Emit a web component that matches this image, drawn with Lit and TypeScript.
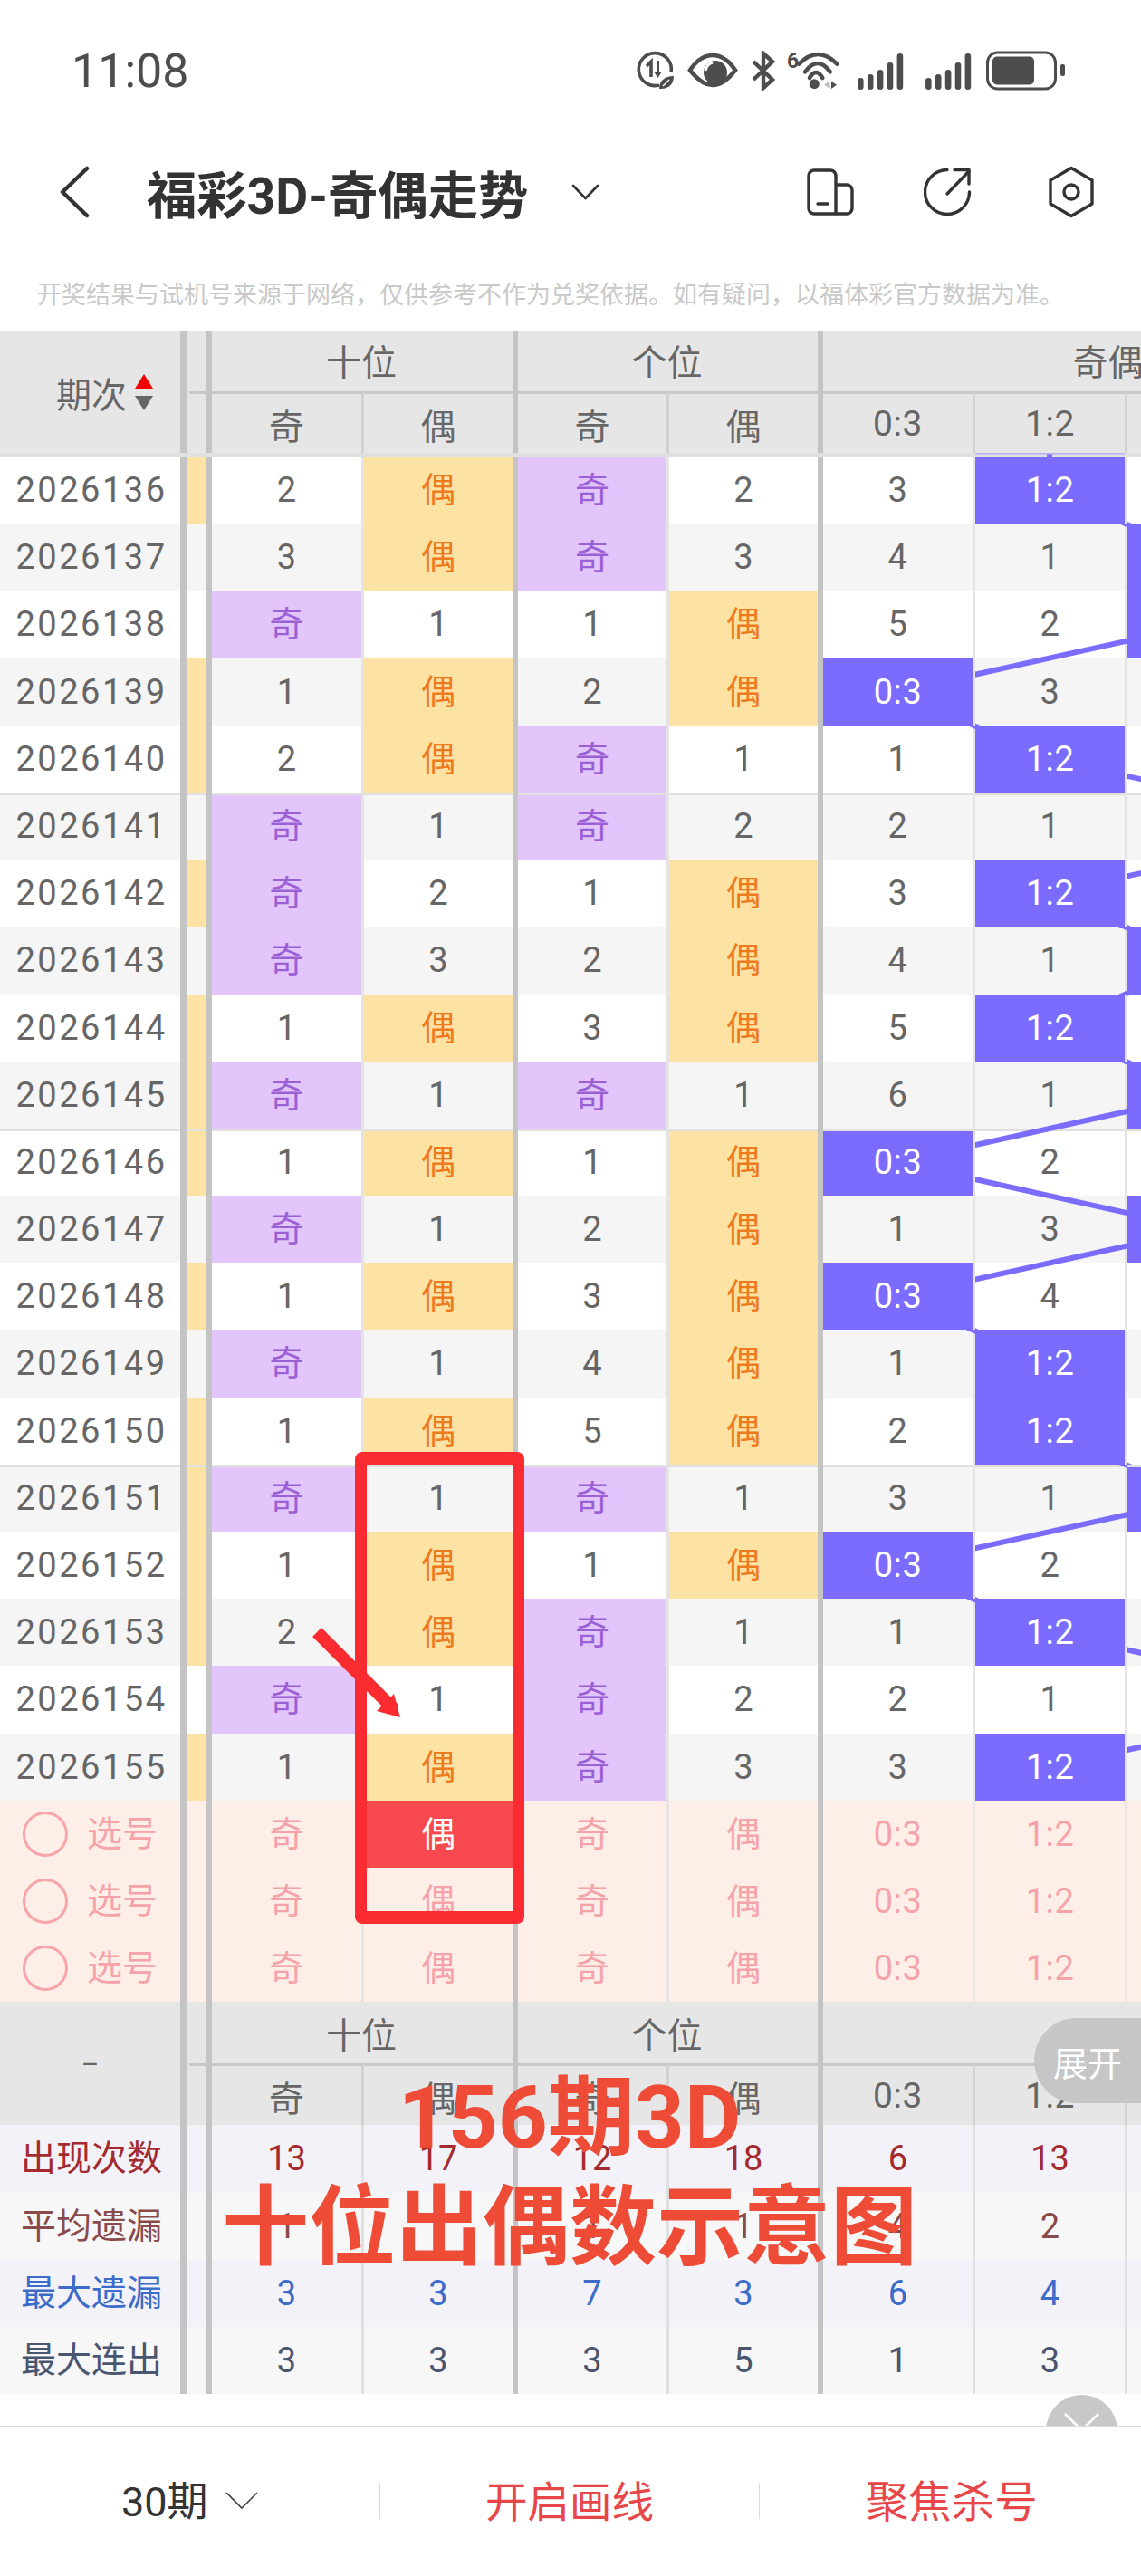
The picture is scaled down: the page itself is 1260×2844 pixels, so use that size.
import {LitElement, html, css, svg} from 'lit';
import {customElement} from 'lit/decorators.js';

const ROW_H = 74.2;
const COL_X = [991, 1159, 1327, 1495];

// ten-odd, ten-even, one-odd, one-even, 0:3 col, 1:2 col, hit column, side flag
const ROWS: [string, string[], number, boolean][] = [
  ['2026136', ['2', '偶', '奇', '2', '3', ''], 1, true],
  ['2026137', ['3', '偶', '奇', '3', '4', '1'], 2, false],
  ['2026138', ['奇', '1', '1', '偶', '5', '2'], 2, false],
  ['2026139', ['1', '偶', '2', '偶', '', '3'], 0, true],
  ['2026140', ['2', '偶', '奇', '1', '1', ''], 1, true],
  ['2026141', ['奇', '1', '奇', '2', '2', '1'], 3, false],
  ['2026142', ['奇', '2', '1', '偶', '3', ''], 1, true],
  ['2026143', ['奇', '3', '2', '偶', '4', '1'], 2, false],
  ['2026144', ['1', '偶', '3', '偶', '5', ''], 1, true],
  ['2026145', ['奇', '1', '奇', '1', '6', '1'], 2, true],
  ['2026146', ['1', '偶', '1', '偶', '', '2'], 0, true],
  ['2026147', ['奇', '1', '2', '偶', '1', '3'], 2, false],
  ['2026148', ['1', '偶', '3', '偶', '', '4'], 0, true],
  ['2026149', ['奇', '1', '4', '偶', '1', ''], 1, false],
  ['2026150', ['1', '偶', '5', '偶', '2', ''], 1, true],
  ['2026151', ['奇', '1', '奇', '1', '3', '1'], 2, true],
  ['2026152', ['1', '偶', '1', '偶', '', '2'], 0, true],
  ['2026153', ['2', '偶', '奇', '1', '1', ''], 1, true],
  ['2026154', ['奇', '1', '奇', '2', '2', '1'], 3, false],
  ['2026155', ['1', '偶', '奇', '3', '3', ''], 1, true],
];

const RATIOS = ['0:3', '1:2', '2:1', '3:0'];

const STATS: [string, string, string[]][] = [
  ['出现次数', 'count', ['13', '17', '12', '18', '6', '13']],
  ['平均遗漏', 'avg', ['1', '1', '1', '1', '4', '2']],
  ['最大遗漏', 'miss', ['3', '3', '7', '3', '6', '4']],
  ['最大连出', 'run', ['3', '3', '3', '5', '1', '3']],
];

const KINDS = ['thin', 'thick', 'thin', 'thick', 'thin', 'thin', 'thin', 'thin'];

@customElement('app-root')
export class AppRoot extends LitElement {
  static styles = css`
    :host {
      display: block;
      position: relative;
      width: 1260px;
      height: 2844px;
      overflow: hidden;
      background: #fff;
      font-family: Roboto, 'Noto Sans CJK SC', sans-serif;
      color: #666;
      --cols: 206px 28px 168px 170px 167px 170px 168px 168px 168px 168px;
    }
    .status {
      height: 130px;
      display: flex;
      align-items: flex-start;
      box-sizing: border-box;
      padding: 50px 0 0 79px;
      color: #4d4d4d;
    }
    .time {
      font-size: 52px;
      line-height: 58px;
      width: 622px;
    }
    .status svg {
      flex: none;
      display: block;
      margin-top: 5px;
    }
    .status .eye {
      margin-top: 8px;
    }
    .status .bt {
      margin-top: 6px;
    }
    .nav {
      height: 164px;
      display: flex;
      align-items: center;
      color: #333;
      position: relative;
    }
    .nav svg {
      flex: none;
      display: block;
    }
    .back {
      margin: 0 0 0 64px;
    }
    .title {
      font-size: 55.3px;
      font-weight: 700;
      margin-left: 62px;
      width: 469px;
      white-space: nowrap;
    }
    .caret {
      margin-right: 229px;
    }
    .notice {
      height: 71px;
      padding: 14px 0 0 41px;
      box-sizing: border-box;
      font-size: 27px;
      line-height: 36px;
      color: #c9c9c9;
      white-space: nowrap;
    }
    .table {
      width: 1596px;
    }
    .head {
      display: grid;
      grid-template-columns: var(--cols);
      grid-template-rows: 67px 68px;
      background: #e6e6e6;
      font-size: 39px;
      text-align: center;
    }
    .head.first {
      border-bottom: 4px solid #e0e0e0;
    }
    .head.second {
      grid-template-rows: 68px 68px;
    }
    .head > div {
      display: flex;
      align-items: center;
      justify-content: center;
      box-sizing: border-box;
    }
    .first .group {
      padding-bottom: 4px;
    }
    .corner {
      grid-row: span 2;
      border-right: 7px solid #c4c4c4;
      gap: 9px;
    }
    .first .corner {
      padding: 0 0 0 32px;
    }
    .dash {
      font-size: 30px;
    }
    .sort {
      display: flex;
      flex-direction: column;
      gap: 8px;
    }
    .up,
    .down {
      width: 0;
      height: 0;
      border-left: 10px solid transparent;
      border-right: 10px solid transparent;
    }
    .up {
      border-bottom: 16px solid #f00000;
    }
    .down {
      border-top: 16px solid #666;
    }
    .group {
      border-right: 6px solid #c4c4c4;
      padding-right: 2px;
    }
    .side {
      border-right: 7px solid #c4c4c4;
    }
    .group.two {
      grid-column: span 2;
    }
    .group.four {
      grid-column: span 4;
      border-right: 0;
      padding-right: 4px;
    }
    .sub {
      border-top: 3px solid #c8c8c8;
      border-right: 3px solid #d2d2d2;
    }
    .sub.thick {
      border-right: 6px solid #c4c4c4;
    }
    .sub.gap {
      margin-left: 3px;
      border-right: 7px solid #c4c4c4;
    }
    .body {
      position: relative;
    }
    .links {
      position: absolute;
      left: 0;
      top: 0;
      z-index: 1;
      overflow: visible;
      pointer-events: none;
    }
    .row {
      display: grid;
      grid-template-columns: var(--cols);
      height: 74.2px;
      background: #fff;
      font-size: 38px;
      text-align: center;
      line-height: 74px;
    }
    .row.alt {
      background: #f5f5f5;
    }
    .row > div {
      box-sizing: border-box;
      border-right: 3px solid #e4e4e4;
    }
    .row > .thick {
      border-right: 6px solid #c4c4c4;
    }
    .row > .period {
      border-right: 7px solid #c4c4c4;
      letter-spacing: 2.5px;
      padding-left: 3px;
    }
    .row > .flag {
      border-right: 7px solid #c4c4c4;
    }
    .row.cut > div {
      box-shadow: inset 0 3px #e0e0e0;
    }
    .ji {
      background: #e2c6fb;
      color: #9b5fd6;
    }
    .ou,
    .flag.on {
      background: #fde3a3;
      color: #ee7a1e;
    }
    .row > .hit {
      position: relative;
      z-index: 2;
      background: #7c6bff;
      color: #fff;
    }
    .num {
      letter-spacing: 0.6px;
    }
    .pick {
      background: #fdeee8;
      color: #f5a3a8;
    }
    .pick.row > div {
      border-right-color: #e6e6e6;
    }
    .pick.row > .thick,
    .pick.row > .period,
    .pick.row > .flag {
      border-right-color: #c4c4c4;
    }
    .row > .period.choose {
      display: flex;
      align-items: center;
      gap: 21px;
      padding-left: 25px;
      letter-spacing: 0;
      font-size: 39px;
    }
    .ring {
      width: 50px;
      height: 50px;
      box-sizing: border-box;
      border: 3px solid #f7a5a8;
      border-radius: 50%;
    }
    .row > .sel {
      background: #f84a4e;
      color: #fff;
    }
    .stat {
      background: #f2f2f8;
    }
    .stat.even {
      background: #f7f7f8;
    }
    .stat.row > div {
      border-right-color: #e0e0e0;
    }
    .stat.row > .thick,
    .stat.row > .period,
    .stat.row > .flag {
      border-right-color: #c4c4c4;
    }
    .stat .period {
      letter-spacing: 0;
      font-size: 39px;
    }
    .count {
      color: #a52a2f;
    }
    .avg {
      color: #8a4a4a;
    }
    .miss {
      color: #3d6bc9;
    }
    .run {
      color: #4a5570;
    }
    .bar {
      position: absolute;
      left: 0;
      right: 0;
      bottom: 0;
      height: 166px;
      box-sizing: border-box;
      border-top: 2px solid #dcdcdc;
      padding-bottom: 2px;
      background: #fff;
      display: flex;
      align-items: center;
      z-index: 6;
    }
    .bar > div {
      flex: 1;
      height: 40px;
      display: flex;
      align-items: center;
      justify-content: center;
      gap: 19px;
      font-size: 46.5px;
      color: #e8474a;
    }
    .bar > div > span {
      position: relative;
      top: -3px;
    }
    .bar > div + div {
      border-left: 1px solid #dcdcdc;
    }
    .bar > .kill {
      font-size: 47.5px;
      padding-left: 2px;
    }
    .bar .span {
      color: #333;
      font-size: 45px;
    }
    .close {
      position: absolute;
      left: 1155px;
      top: 2644px;
      width: 79px;
      height: 79px;
      border-radius: 50%;
      background: #c8c8c8;
      z-index: 5;
    }
    .expand {
      position: absolute;
      left: 1142px;
      top: 2228px;
      width: 118px;
      height: 94px;
      border-radius: 47px 0 0 47px;
      background: #c6c6c6;
      color: #fff;
      font-size: 38px;
      display: flex;
      align-items: center;
      justify-content: center;
      z-index: 5;
    }
    .frame {
      position: absolute;
      left: 392px;
      top: 1603px;
      width: 187px;
      height: 521px;
      box-sizing: border-box;
      border: 14px solid #fb2c31;
      border-left-width: 13px;
      border-right-width: 13px;
      border-radius: 8px;
      z-index: 7;
    }
    .arrow {
      position: absolute;
      left: 340px;
      top: 1795px;
      z-index: 8;
    }
    .caption {
      position: absolute;
      left: 0;
      width: 1258px;
      text-align: center;
      font-size: 96px;
      font-weight: 700;
      line-height: 96px;
      color: #ee4c37;
      z-index: 8;
      white-space: nowrap;
    }
    .caption.one {
      top: 2290px;
    }
    .caption.two {
      top: 2411px;
    }
  `;

  statusIcons() {
    const bars = [13, 17, 22, 30, 40];
    const signal = (x: number, w: number) => html`<svg style="margin-left:${x}px" width="${w}" height="46" viewBox="0 0 ${w} 46" fill="#4d4d4d">
      ${bars.map((h, i) => svg`<rect x=${i * 10.9} y=${44 - h} width="6.6" height=${h} rx="3.3"></rect>`)}
    </svg>`;
    return html`
      <svg width="44" height="46" viewBox="0 0 44 46" fill="none" stroke="#4d4d4d">
        <path d="M40 25A18 18 0 1 0 27 39" stroke-width="3.6"></path>
        <path d="M13 18L18 13V30" stroke-width="3.6"></path>
        <path d="M25.5 12V29" stroke-width="3"></path>
        <path d="M21 24H30L25.5 31Z" fill="#4d4d4d" stroke="none"></path>
        <path d="M27 43C27 34 33 29 43 29C43 38 37 44 27 43Z" fill="#4d4d4d" stroke="none"></path>
        <path d="M31 40L38 33" stroke="#fff" stroke-width="1.5"></path>
      </svg>
      <svg class="eye" style="margin-left:14px" width="56" height="40" viewBox="0 0 56 40" fill="none" stroke="#4d4d4d">
        <path d="M3 19.5C12 6 20 3 28 3C36 3 44 6 53 19.5C44 31 36 36 28 36C20 36 12 31 3 19.5Z" stroke-width="4.6"></path>
        <circle cx="31" cy="22" r="13" fill="#4d4d4d" stroke="none"></circle>
        <path d="M20 20C21 15 24 12 28 11" stroke="#fff" stroke-width="3"></path>
      </svg>
      <svg class="bt" style="margin-left:14px" width="28" height="44" viewBox="0 0 28 44" fill="none" stroke="#4d4d4d" stroke-width="4.4">
        <path d="M3 12L24 32L14 41V3L24 12L3 32"></path>
      </svg>
      <svg style="margin-left:11px" width="60" height="46" viewBox="0 0 60 46" fill="none" stroke="#4d4d4d" stroke-width="4.6" stroke-linecap="round">
        <text x="1" y="20" font-size="23" font-weight="700" fill="#4d4d4d" stroke="none">6</text>
        <path d="M14.3 15.7Q35.3 -5.7 56.3 15.7"></path>
        <path d="M21 24.3Q35 5.7 48.7 24.3"></path>
        <path d="M26 31Q33 19 40.3 31"></path>
        <circle cx="31.3" cy="37.7" r="5.5" fill="#4d4d4d" stroke="none"></circle>
        <path d="M42 38.5L48.5 34.5V43Z" fill="#bbb" stroke="none"></path>
        <path d="M50 34.5V43L56 38.7Z" fill="#4d4d4d" stroke="none"></path>
      </svg>
      ${signal(19, 52)} ${signal(23, 52)}
      <svg style="margin-left:15px" width="88" height="46" viewBox="0 0 88 46" fill="none">
        <rect x="1.5" y="3" width="75" height="40" rx="11" stroke="#4d4d4d" stroke-width="3"></rect>
        <rect x="7" y="7.5" width="46" height="31" rx="5" fill="#4d4d4d"></rect>
        <rect x="82" y="16" width="5" height="13" rx="2" fill="#4d4d4d"></rect>
      </svg>
    `;
  }

  navBar() {
    return html`
      <div class="nav">
        <svg class="back" width="36" height="58" viewBox="0 0 36 58" fill="none" stroke="#333" stroke-width="4.5" stroke-linecap="round" stroke-linejoin="round">
          <path d="M32 3L5 29L32 55"></path>
        </svg>
        <div class="title">福彩3D-奇偶走势</div>
        <svg class="caret" width="31" height="20" viewBox="0 0 31 20" fill="none" stroke="#333" stroke-width="2.6" stroke-linecap="round" stroke-linejoin="round">
          <path d="M2 3L15.5 17L29 3"></path>
        </svg>
        <svg width="52" height="52" viewBox="0 0 52 52" fill="none" stroke="#333" stroke-width="3.4" stroke-linejoin="round">
          <path d="M32 50H8A6 6 0 0 1 2 44V8A6 6 0 0 1 8 2H26A6 6 0 0 1 32 8Z"></path>
          <path d="M32 18H44A6 6 0 0 1 50 24V44A6 6 0 0 1 44 50H32"></path>
          <path d="M12 39H23" stroke-linecap="round"></path>
        </svg>
        <svg style="margin-left:77px" width="54" height="54" viewBox="0 0 54 54" fill="none" stroke="#333" stroke-width="3.4" stroke-linecap="round" stroke-linejoin="round">
          <path d="M26 2.5A24.5 24.5 0 1 0 50.5 27"></path>
          <path d="M26 29L50 4"></path>
          <path d="M34 2.5H50V18"></path>
        </svg>
        <svg style="margin-left:82px" width="54" height="58" viewBox="0 0 54 58" fill="none" stroke="#333" stroke-width="3.4" stroke-linejoin="round">
          <path d="M27 2.5L50 16V42L27 55.5L4 42V16Z"></path>
          <circle cx="27" cy="29" r="8"></circle>
        </svg>
      </div>
    `;
  }

  header(first: boolean) {
    return html`
      <div class="head ${first ? 'first' : 'second'}">
        ${first
          ? html`<div class="corner">
              期次
              <span class="sort"><span class="up"></span><span class="down"></span></span>
            </div>`
          : html`<div class="corner"><span class="dash">–</span></div>`}
        <div class="side"></div>
        <div class="group two">十位</div>
        <div class="group two">个位</div>
        <div class="group four">奇偶比</div>
        <div class="sub gap"></div>
        <div class="sub">奇</div>
        <div class="sub thick">偶</div>
        <div class="sub">奇</div>
        <div class="sub thick">偶</div>
        ${RATIOS.map((r) => html`<div class="sub num">${r}</div>`)}
      </div>
    `;
  }

  cellClass(value: string, i: number) {
    const kind = KINDS[i] === 'thick' ? 'thick' : '';
    if (value === '奇') return `ji ${kind}`;
    if (value === '偶') return `ou ${kind}`;
    return kind;
  }

  linkPoints() {
    return ROWS.map(([, , hit], i) => `${COL_X[hit]},${(i + 0.5) * ROW_H}`).join(' ');
  }

  dataRow(row: [string, string[], number, boolean], i: number) {
    const [id, cells, hit, flag] = row;
    const classes = `row ${i % 2 ? 'alt' : ''} ${i > 0 && i % 5 === 0 ? 'cut' : ''}`;
    return html`
      <div class=${classes}>
        <div class="period">${id}</div>
        <div class="flag ${flag ? 'on' : ''}"></div>
        ${cells.slice(0, 4).map((c, n) => html`<div class=${this.cellClass(c, n)}>${c}</div>`)}
        ${RATIOS.map((r, n) => {
          const value = n < 2 ? cells[4 + n] : '';
          return hit === n
            ? html`<div class="hit num">${r}</div>`
            : html`<div class="num">${value}</div>`;
        })}
      </div>
    `;
  }

  pickRow(i: number) {
    return html`
      <div class="row pick">
        <div class="period choose"><span class="ring"></span>选号</div>
        <div class="flag"></div>
        <div>奇</div>
        <div class="thick ${i === 0 ? 'sel' : ''}">偶</div>
        <div>奇</div>
        <div class="thick">偶</div>
        ${RATIOS.map((r) => html`<div class="num">${r}</div>`)}
      </div>
    `;
  }

  statRow(stat: [string, string, string[]], i: number) {
    const [label, tone, values] = stat;
    return html`
      <div class="row stat ${i % 2 ? 'even' : ''} ${tone}">
        <div class="period">${label}</div>
        <div class="flag"></div>
        ${values.map((v, n) => html`<div class=${KINDS[n] === 'thick' ? 'thick' : ''}>${v}</div>`)}
        <div></div>
        <div></div>
      </div>
    `;
  }

  render() {
    return html`
      <div class="status">
        <div class="time">11:08</div>
        ${this.statusIcons()}
      </div>
      ${this.navBar()}
      <div class="notice">开奖结果与试机号来源于网络，仅供参考不作为兑奖依据。如有疑问，以福体彩官方数据为准。</div>
      <div class="table">
        ${this.header(true)}
        <div class="body">
          <svg class="links" width="1596" height="1484" fill="none" stroke="#7c6bff" stroke-width="6">
            <path d="M1159 -4V37"></path>
            <rect x="1077" y="-4" width="165" height="1.5" fill="#b9b1ff" stroke="none"></rect>
            <polyline points=${this.linkPoints()}></polyline>
          </svg>
          ${ROWS.map((r, i) => this.dataRow(r, i))}
        </div>
        ${[0, 1, 2].map((i) => this.pickRow(i))}
        ${this.header(false)}
        ${STATS.map((s, i) => this.statRow(s, i))}
      </div>
      <div class="expand">展开</div>
      <div class="close">
        <svg width="79" height="79" viewBox="0 0 79 79" fill="none" stroke="#fff" stroke-width="2.6">
          <path d="M21 21L39.5 39L58 21"></path>
        </svg>
      </div>
      <div class="bar">
        <div class="span">
          <span>30期</span>
          <svg width="36" height="20" viewBox="0 0 36 20" fill="none" stroke="#444" stroke-width="1.6">
            <path d="M1 1L18 18L35 1"></path>
          </svg>
        </div>
        <div><span>开启画线</span></div>
        <div class="kill"><span>聚焦杀号</span></div>
      </div>
      <div class="frame"></div>
      <svg class="arrow" width="110" height="110" viewBox="0 0 110 110">
        <path d="M10 7L95 92" stroke="#fb2c31" stroke-width="14" fill="none"></path>
        <path d="M102 101L95 75L76 94Z" fill="#fb2c31"></path>
      </svg>
      <div class="caption one">156期3D</div>
      <div class="caption two">十位出偶数示意图</div>
    `;
  }
}
